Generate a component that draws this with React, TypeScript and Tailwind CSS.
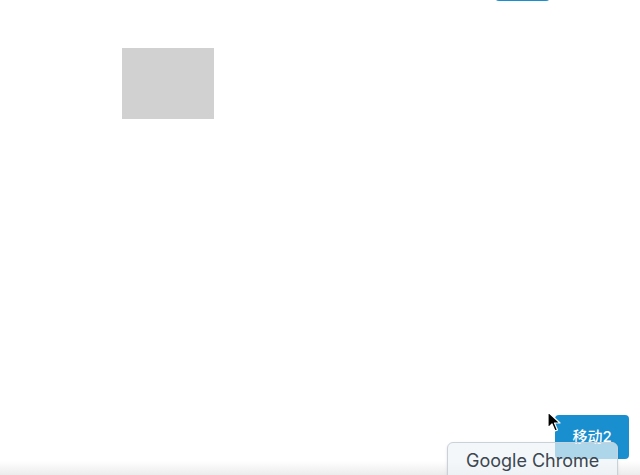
import React from "react";

function Cursor() {
  return (
    <svg width="16" height="22" viewBox="0 0 16 22" className="absolute left-[547px] top-[411px]">
      <path d="M1 1 L1 17 L5 13 L8 20 L10.5 19 L7.5 12 L13 12 Z" fill="#000" stroke="#fff" strokeWidth="1.2" strokeLinejoin="round" />
    </svg>
  );
}

export default function App() {
  return (
    <div className="relative w-[640px] h-[475px] overflow-hidden bg-white" style={{ fontFamily: "Inter, 'Noto Sans CJK SC', sans-serif" }}>
      {/* edge of a button above the viewport */}
      <div className="absolute left-[495px] top-[-30px] w-[55px] h-[31px] rounded bg-[#1a8fd0]" />

      <div className="pt-[48px] pl-[122px]">
        <div className="w-[92px] h-[71px] bg-[#d1d1d2]" />
      </div>

      <div className="absolute left-0 right-0 bottom-0 h-[14px] bg-gradient-to-b from-white to-[#ececec]" />

      <button className="absolute left-[555px] top-[415px] w-[74px] h-[44px] rounded bg-[#1a8fd0] text-white text-[15px] font-medium flex items-center justify-center pt-[1px]">
        移动2
      </button>

      <div className="absolute left-[447px] top-[442px] w-[171px] h-[40px] rounded-md border border-[#c9d2d8] bg-[#eef3f6]/70 text-[#3c4650] text-[18px] pl-[18px] pt-[4px] shadow-sm">
        Google Chrome
      </div>

      <Cursor />
    </div>
  );
}
